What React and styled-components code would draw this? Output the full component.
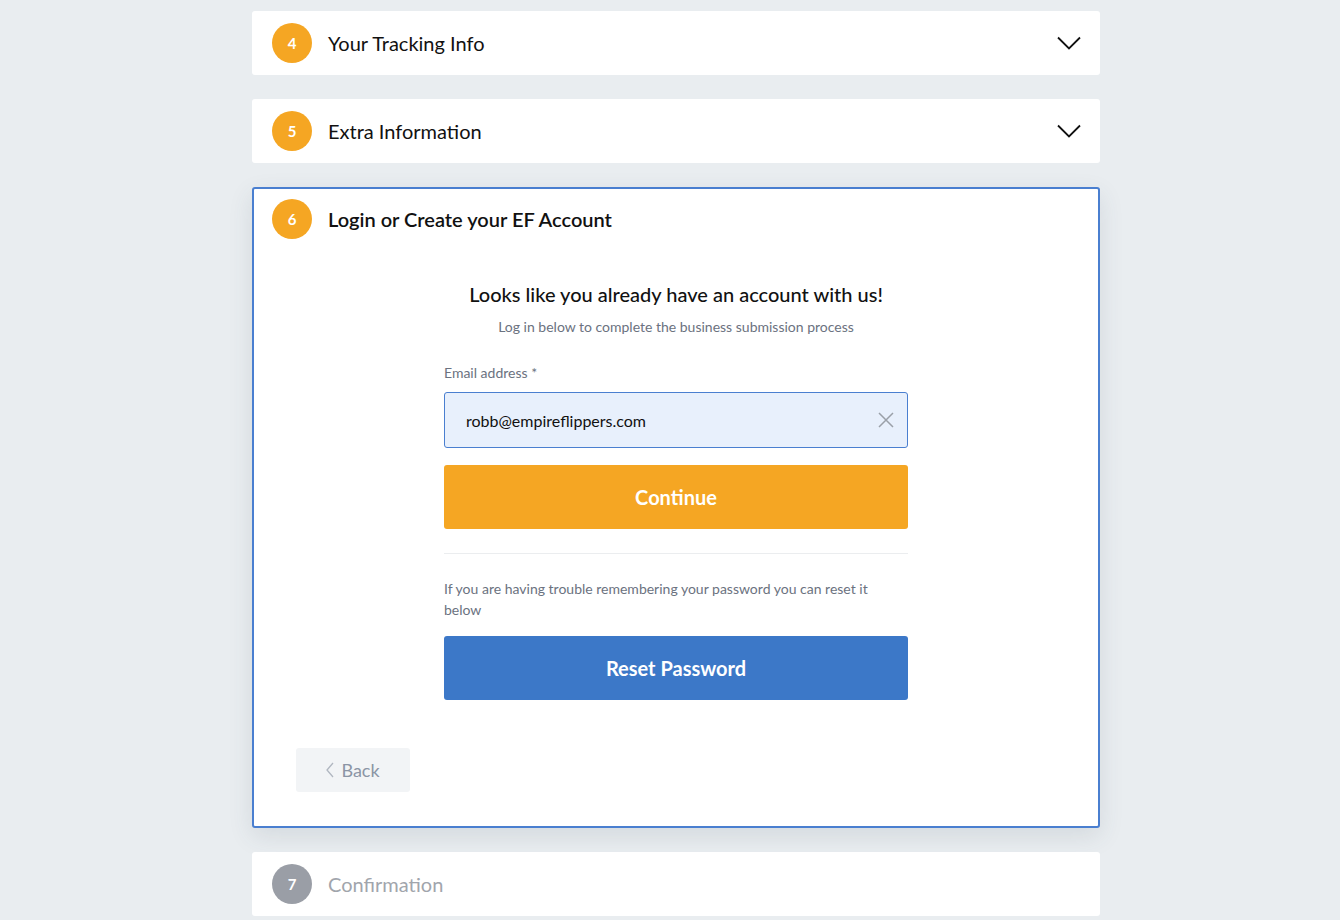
import React from 'react';
import styled, { createGlobalStyle } from 'styled-components';

const GlobalStyle = createGlobalStyle`
  html, body {
    margin: 0;
    padding: 0;
    background: #e9edf0;
    font-family: Lato, "Open Sans", Arial, sans-serif;
  }
`;

const Page = styled.div`
  width: 848px;
  margin-left: calc(50% - 418px);
  padding-top: 11px;
  display: flex;
  flex-direction: column;
  gap: 24px;
`;

const Card = styled.div`
  background: #fff;
  border-radius: 3px;
  border: ${p => (p.active ? '2px solid #4a7fd0' : 'none')};
  box-shadow: ${p => (p.active ? '0 8px 24px rgba(60, 70, 90, 0.12)' : 'none')};
  padding-bottom: ${p => (p.active ? '34px' : '0')};
`;

const Header = styled.div`
  display: flex;
  align-items: center;
  height: 64px;
  padding: 0 19px 0 20px;
  margin-top: ${p => (p.active ? '-2px' : '0')};
  margin-left: ${p => (p.active ? '-2px' : '0')};
`;

const Step = styled.div`
  width: 40px;
  height: 40px;
  border-radius: 50%;
  background: ${p => (p.muted ? '#9a9ea6' : '#f5a623')};
  color: #fff;
  font-size: 15px;
  font-weight: 700;
  display: flex;
  align-items: center;
  justify-content: center;
  flex-shrink: 0;
`;

const Title = styled.div`
  margin-left: 16px;
  font-size: 20px;
  font-weight: ${p => (p.bold ? 600 : 400)};
  color: ${p => (p.muted ? '#a1a5ac' : '#111')};
  flex: 1;
`;

const Chevron = styled.svg`
  width: 24px;
  height: 14px;
`;

const Body = styled.div`
  width: 464px;
  margin: 0 auto;
  padding-top: 31px;
  display: flex;
  flex-direction: column;
`;

const Headline = styled.h2`
  margin: 0;
  text-align: center;
  font-size: 20px;
  font-weight: 500;
  color: #111;
`;

const Sub = styled.p`
  margin: 12px 0 0;
  text-align: center;
  font-size: 14px;
  color: #6b7280;
`;

const Label = styled.label`
  margin-top: 29px;
  font-size: 14px;
  color: #6b7280;
`;

const InputBox = styled.div`
  margin-top: 11px;
  height: 56px;
  box-sizing: border-box;
  border: 1px solid #4a7fd0;
  border-radius: 3px;
  background: #e8f0fc;
  display: flex;
  align-items: center;
  padding: 0 13px 0 21px;
`;

const Input = styled.input`
  flex: 1;
  border: none;
  padding: 0;
  background: transparent;
  font-family: Lato, Arial, sans-serif;
  font-size: 16px;
  color: #111;
  outline: none;
`;

const Button = styled.button`
  height: 64px;
  width: 100%;
  border: none;
  border-radius: 3px;
  background: ${p => p.color};
  color: #fff;
  font-family: Lato, Arial, sans-serif;
  font-size: 20px;
  font-weight: 700;
  margin-top: ${p => p.top}px;
  cursor: pointer;
`;

const Divider = styled.hr`
  margin: 24px 0 0;
  border: none;
  border-top: 1px solid #ebedef;
`;

const Help = styled.p`
  margin: 24px 0 0;
  font-size: 14px;
  line-height: 21px;
  color: #6b7280;
  padding-right: 30px;
`;

const Footer = styled.div`
  padding: 48px 0 0 42px;
`;

const BackButton = styled.button`
  width: 114px;
  height: 44px;
  border: none;
  border-radius: 3px;
  background: #f2f4f6;
  color: #8b95a5;
  font-family: Lato, Arial, sans-serif;
  font-size: 18px;
  display: flex;
  align-items: center;
  justify-content: center;
  gap: 7px;
`;

const ChevronDown = () => (
  <Chevron viewBox="0 0 24 14" fill="none">
    <path d="M1 1.5 L12 12.5 L23 1.5" stroke="#111" strokeWidth="1.8" />
  </Chevron>
);

function Collapsed({ n, title, muted, chevron }) {
  return (
    <Card>
      <Header>
        <Step muted={muted}>{n}</Step>
        <Title muted={muted}>{title}</Title>
        {chevron && <ChevronDown />}
      </Header>
    </Card>
  );
}

export default function App() {
  return (
    <>
      <GlobalStyle />
      <Page>
        <Collapsed n="4" title="Your Tracking Info" chevron />
        <Collapsed n="5" title="Extra Information" chevron />
        <Card active>
          <Header active>
            <Step>6</Step>
            <Title bold>Login or Create your EF Account</Title>
          </Header>
          <Body>
            <Headline>Looks like you already have an account with us!</Headline>
            <Sub>Log in below to complete the business submission process</Sub>
            <Label>Email address *</Label>
            <InputBox>
              <Input defaultValue="robb@empireflippers.com" />
              <svg width="16" height="16" viewBox="0 0 16 16">
                <path d="M1 1 L15 15 M15 1 L1 15" stroke="#9aa0a8" strokeWidth="1.5" />
              </svg>
            </InputBox>
            <Button color="#f5a623" top={17}>Continue</Button>
            <Divider />
            <Help>If you are having trouble remembering your password you can reset it below</Help>
            <Button color="#3c78c8" top={16}>Reset Password</Button>
          </Body>
          <Footer>
            <BackButton>
              <svg width="8" height="16" viewBox="0 0 8 16">
                <path d="M7 1 L1 8 L7 15" stroke="#b0b6c0" strokeWidth="1.3" fill="none" />
              </svg>
              Back
            </BackButton>
          </Footer>
        </Card>
        <Collapsed n="7" title="Confirmation" muted />
      </Page>
    </>
  );
}
